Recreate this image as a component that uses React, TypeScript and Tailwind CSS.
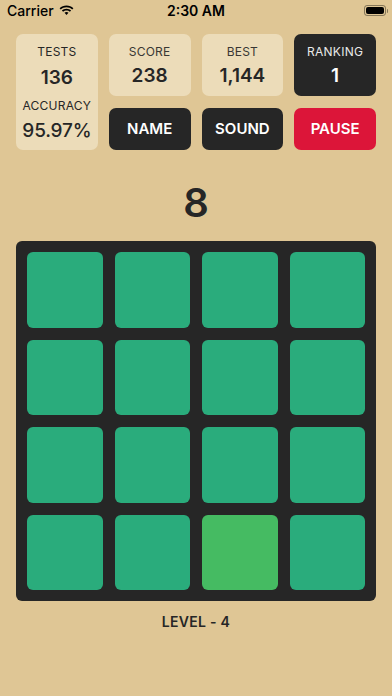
import React from "react";

const FONT = "font-['Inter','Noto_Sans',sans-serif]";

const ACTIVE_TILE = 14;

function StatusBar() {
  return (
    <div className="relative flex h-[20px] items-center pl-[7px] pr-[4px] pt-[1px] text-[14px] font-medium text-black">
      <div className="flex items-center gap-[5px]">
        <span>Carrier</span>
        <svg width="15" height="11" viewBox="0 0 15 11" className="mt-[-1px]">
          <path d="M7.5 2.2c2.2 0 4.2.9 5.7 2.3l1.2-1.2C12.6 1.5 10.2.5 7.5.5S2.4 1.5.6 3.3l1.2 1.2C3.3 3.1 5.3 2.2 7.5 2.2z" fill="#000" />
          <path d="M7.5 5.4c1.3 0 2.5.5 3.4 1.3l1.2-1.2C10.9 4.4 9.3 3.7 7.5 3.7S4.1 4.4 2.9 5.5l1.2 1.2c.9-.8 2.1-1.3 3.4-1.3z" fill="#000" />
          <path d="M7.5 7c-.8 0-1.4.3-2 .8l2 2.2 2-2.2c-.6-.5-1.2-.8-2-.8z" fill="#000" />
        </svg>
      </div>
      <span className="absolute left-1/2 -translate-x-1/2 font-semibold">2:30 AM</span>
      <div className="ml-auto flex items-center">
        <div className="h-[11px] w-[22px] rounded-[3px] border border-black/40 p-[1px]">
          <div className="h-full w-full rounded-[2px] bg-black" />
        </div>
        <div className="ml-[1px] h-[4px] w-[1.5px] rounded-r-sm bg-black/40" />
      </div>
    </div>
  );
}

function StatCard({ label, value, dark = false }: { label: string; value: string; dark?: boolean }) {
  return (
    <div
      className={[
        "flex h-[62px] flex-col items-center justify-center rounded-[7px]",
        dark ? "bg-[#262626] text-white" : "bg-[#ecdcb9] text-[#262626]",
      ].join(" ")}
    >
      <span className="text-[12px] leading-none tracking-[0.02em] opacity-90">{label}</span>
      <span className="mt-[8px] text-[19px] font-semibold leading-none">{value}</span>
    </div>
  );
}

function ActionButton({ label, red = false }: { label: string; red?: boolean }) {
  return (
    <button
      className={[
        "flex h-[42px] items-center justify-center rounded-[7px] text-[15px] font-semibold text-white",
        red ? "bg-[#dc1539]" : "bg-[#262626]",
      ].join(" ")}
    >
      {label}
    </button>
  );
}

export default function App() {
  const tiles = Array.from({ length: 16 }, (_, i) => i);

  return (
    <div className={`${FONT} flex h-[696px] w-[392px] flex-col bg-[#dfc695] text-[#262626]`}>
      <StatusBar />

      {/* stats + controls */}
      <div className="mt-[14px] grid grid-cols-4 grid-rows-[62px_42px] gap-x-[11px] gap-y-[12px] px-[16px]">
        <div className="row-span-2 flex flex-col items-center rounded-[7px] bg-[#ecdcb9] pt-[12px]">
          <span className="text-[12px] leading-none tracking-[0.02em]">TESTS</span>
          <span className="mt-[10px] text-[19px] font-semibold leading-none">136</span>
          <span className="mt-[13px] text-[12px] leading-none tracking-[0.02em]">ACCURACY</span>
          <span className="mt-[9px] text-[19px] font-medium leading-none tracking-[-0.01em]">95.97%</span>
        </div>
        <StatCard label="SCORE" value="238" />
        <StatCard label="BEST" value="1,144" />
        <StatCard label="RANKING" value="1" dark />
        <ActionButton label="NAME" />
        <ActionButton label="SOUND" />
        <ActionButton label="PAUSE" red />
      </div>

      <div className="mt-[32px] flex h-[42px] items-center justify-center text-[40px] font-semibold leading-none">
        8
      </div>

      {/* board */}
      <div className="mx-[16px] mt-[17px] grid grid-cols-4 gap-[12px] rounded-[6px] bg-[#262626] p-[11px]">
        {tiles.map((i) => (
          <div
            key={i}
            className={[
              "aspect-square rounded-[6px]",
              i === ACTIVE_TILE ? "bg-[#45bb62]" : "bg-[#2aac7c]",
            ].join(" ")}
          />
        ))}
      </div>

      <div className="mt-[10px] text-center text-[14px] font-semibold tracking-[0.02em]">LEVEL - 4</div>
    </div>
  );
}
